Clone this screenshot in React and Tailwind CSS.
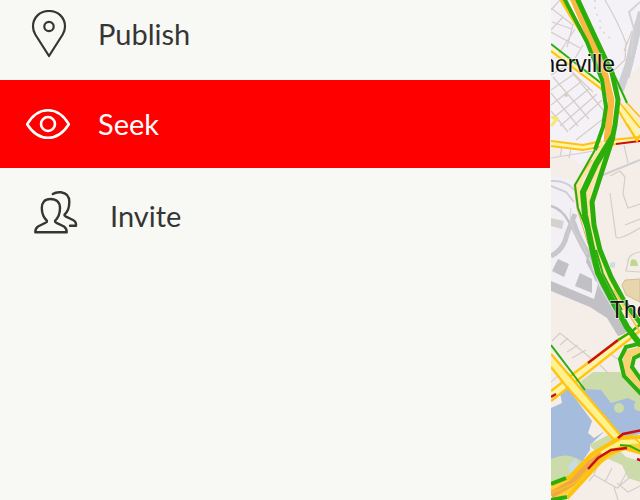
import React, { useState } from 'react';

const PinIcon = () => (
  <svg className="h-12 w-11 shrink-0" viewBox="0 0 44 48" fill="none" stroke="currentColor" strokeWidth="2.2" aria-hidden="true">
    <path d="M23 46 L9.3 24.5 C7.6 21.6 7 19.500 7 16.500 C7 7.500 13.800 1 23 1 C32.200 1 39 7.500 39 16.500 C39 19.500 38.400 21.600 36.700 24.500 Z" strokeLinejoin="round" />
    <circle cx="23" cy="16.500" r="4.700" />
  </svg>
);

const EyeIcon = () => (
  <svg className="h-8 w-11 shrink-0" viewBox="0 0 44 32" fill="none" stroke="currentColor" strokeWidth="2.6" aria-hidden="true">
    <path d="M1.2 16.2 C7 6.500 13.500 2.300 22 2.300 C30.500 2.300 37 6.500 42.800 16.200 C37 25.500 30.500 29.700 22 29.700 C13.500 29.700 7 25.500 1.200 16.200 Z" strokeLinejoin="round" />
    <circle cx="22" cy="16" r="7" />
  </svg>
);

const PeopleIcon = () => (
  <svg className="h-11 w-11 shrink-0" viewBox="0 0 44 44" fill="none" stroke="currentColor" strokeWidth="2.4" strokeLinecap="round" strokeLinejoin="round" aria-hidden="true">
    <path d="M16.500 9 C10.500 9 7.800 12.500 7.800 18 C7.800 24 9.500 27.500 13 30.800 C13.300 31.800 12.500 32.300 11.500 32.800 L4 36.500 C2 37.800 1.300 39 1.300 42.300 H32.700 C32.700 39 32 37.800 30 36.500 L22.500 32.800 C21.500 32.300 20.700 31.800 21 30.800 C24.500 27.500 26 24 26 18 C26 12.500 22.500 9 16.500 9 Z" />
    <path d="M18.800 4 C21 2.500 24 2 27 2.300 C32.500 3 35.300 6.500 35.300 12 C35.300 18 33.800 21.500 30.800 24.300 C30 25.300 30.700 25.800 31.500 26.300 L39 30 C41.500 31.300 42.300 33 42 35.800 H36" />
  </svg>
);

const ITEMS = [
  { label: 'Publish', Icon: PinIcon, row: 'h-20 pl-[26px] pb-3 gap-7', text: '' },
  { label: 'Seek', Icon: EyeIcon, row: 'h-[88px] pl-[26px] gap-7', text: '' },
  { label: 'Invite', Icon: PeopleIcon, row: 'h-[88px] pl-[34px] gap-8', text: 'pt-2' },
];

// Tráfico: primero el terreno, luego calles, carreteras y etiquetas
const TrafficMap = () => (
  <svg
    className="block h-full w-full"
    viewBox="551 0 89 500"
    preserveAspectRatio="xMinYMin slice"
    role="img"
    aria-label="Traffic map"
    fill="none"
  >
    <rect x="551" width="400" height="500" fill="#f5ede7" />
    <path d="M551 0 H640 V65 L618 90 L604 140 L580 165 L551 140 Z" fill="#f5f2f7" />
    <path d="M551 176 L572 180 L590 250 L612 300 L626 330 L606 312 L551 290 Z" fill="#f3f0f5" />

    {/* Agua y parques */}
    <path d="M551 408 L562 403 L560 393 L567 387 L592 421 L588 433 L594 438 L605 431 L590 445 L590 450 L570 480 H551 Z" fill="#a5bcdc" />
    <path d="M576 386 H640 V434 L619 439 L600 413 Z" fill="#a5bcdc" />
    <path d="M593 372 H620 L640 394 V404 L628 398 L611 403 L601 390 L584 389 L581 381 Z" fill="#cbdba9" />
    <circle cx="619" cy="408" r="5" fill="#cbdba9" />
    <circle cx="639" cy="406" r="5" fill="#cbdba9" />
    <path d="M589 445 L612 433 L619 439 L596 452 Z" fill="#cbdba9" />
    <path d="M551 459 Q566 451 582 461 L572 478 L551 485 Z" fill="#cbdba9" />
    <path d="M568 466 L576 458 L579 466 L571 475 Z" fill="#c8dbe2" />
    <path d="M606 458 L620 451 L626 457 L640 461 V482 L628 478 L622 465 Z" fill="#cbdba9" />
    <path d="M640 279 L625 280 L622 285 L626 295 L640 302 Z" fill="#e7d5ae" stroke="#d5bd8b" />
    <path d="M631 260 Q637 257 638 266 L630 266 Z" fill="#bdd98f" />
    <circle cx="566" cy="95" r="2" fill="#c3dfa9" />
    <path d="M610 263 L615 262 L615 268 L610 267 Z" fill="#c8dfdf" />

    {/* Calles */}
    <g stroke="#d5cdc8" strokeWidth="1.2">
      <path d="M551 8 L573 25 L567 47 M552 22 L572 29 M551 32 L580 48 M551 10 L560 0 M563 17 L551 30 M575 29 L556 58 M583 45 L571 65" />
      <path d="M551 75 L566 66 L593 92 M551 90 L574 74 M551 105 L582 81 M552 119 L590 88 M560 126 L597 94 M569 130 L602 100 M576 140 L603 119 M553 77 L589 119 M551 93 L578 126 M551 111 L568 132 M571 71 L604 111" />
      <path d="M605 0 Q618 22 626 43 L625 60 L611 73 M632 31 L624 51 M640 32 L629 78" />
      <path d="M595 0 V10 L601 23 L600 29 L610 38" strokeDasharray="2 5" />
      <path d="M610 176 L620 171 L625 177 L623 194 L628 208 L640 204 M610 193 L616 237 Q618 241 640 228 M625 225 L640 219 M551 158 L594 151 M562 146 L560 157 M571 148 L569 158 M624 145 L628 163 M640 252 Q628 254 628 262 L626 271 L640 272" />
      <path d="M552 341 L560 333 L593 360 M560 345 L568 338 M567 352 L578 345 M572 358 L586 350 M600 365 L614 379 M607 352 L621 361" />
      <path d="M594 475 L617 488 L634 474 M599 461 L594 475 L589 481 M605 482 L612 468 M614 487 L618 500 M617 483 L628 492 L640 486 M628 470 L618 488" />
    </g>
    <path d="M551 382 L562 372 L567 380" stroke="#d0c8c2" />

    {/* Vías de tren */}
    <path d="M642 12 L635 37 L629 64 L620 90" stroke="#cfced2" strokeWidth="8" />
    <path d="M640 2 L629 12 L634 29 L631 56" stroke="#d4d3d7" strokeWidth="2" />
    <path d="M551 206 Q562 209 569 222 L587 256" stroke="#c3c3c7" strokeWidth="2.500" />
    <path d="M551 256 Q564 250 567 234 L575 214" stroke="#c8c8cc" strokeWidth="5" />
    <path d="M573 222 Q578 238 588 254 L598 280" stroke="#c8c8cc" strokeWidth="6" />
    <path d="M551 181 Q567 180 574 190 M551 186 L566 192 L574 202 M598 177 L640 160" stroke="#cfced4" strokeWidth="2" />
    <path d="M571 208 Q568 222 576 234 L592 262" stroke="#d8d2d0" />
    <path d="M551 218 L564 221 L562 229 L551 226 Z" fill="#d5d1ce" />
    <path d="M551 281 L551 291 L590 307 L607 318 L618 336 L630 332 L612 300 L598 270 L588 252 L586 262 L598 284 L594 299 Z" fill="#c1c0c5" />
    <path d="M558 259 L569 264 L564 277 L552 271 Z M580 273 L592 279 L592 293 L575 286 Z" fill="#c1c0c5" />
    <path d="M589 257 L600 287 L622 324 M592 267 L613 303" stroke="#e8e6ea" />

    {/* Avenida superior */}
    <path d="M551 50 L600 86 L617 105 L634 130 L640 139" stroke="#fff4a5" strokeWidth="5" />
    <path d="M551 51 L600 88 L616 102 M617 108 L627 125 L637 140 M627 103 L640 117" stroke="#ffbf12" strokeWidth="1.8" />
    <path d="M623 106 L640 127" stroke="#fff19b" strokeWidth="6" />
    <path d="M620 103 L640 128" stroke="#ffbf12" strokeWidth="1.5" />
    <path d="M551 44 L601 83 M612 70 L627 103" stroke="#2aae0b" strokeWidth="2" />
    <path d="M551 117 L557 119 L551 126" stroke="#f6e76d" strokeWidth="3" />

    {/* Avenida horizontal */}
    <path d="M551 143 L583 148 L605 144 L640 139" stroke="#fff4a5" strokeWidth="5" />
    <path d="M551 141 L583 145 L602 141 L640 137 M551 146 L583 150 L616 144" stroke="#ffc114" strokeWidth="2" />
    <path d="M616 144 L640 141" stroke="#cb0e13" strokeWidth="2" />
    <path d="M627 124 L637 141 L640 135" stroke="#ffc114" strokeWidth="2" />

    {/* Avenidas inferiores */}
    <path d="M551 396 L578 374 L634 332 L640 327" stroke="#fff4a5" strokeWidth="9" />
    <path d="M551 391 L573 374 L627 334 M551 401 L583 376 L640 331" stroke="#ffc414" strokeWidth="2.4" />
    <path d="M551 361 L572 384 L618 440" stroke="#fff18b" strokeWidth="9" />
    <path d="M551 367 L566 386 L614 440 M551 354 L575 382 L621 436" stroke="#ffc414" strokeWidth="2.4" />
    <path d="M551 345 L573 374 L585 390" stroke="#2aae0b" strokeWidth="2" />
    <path d="M588 363 L618 340 M551 397 L556 394" stroke="#cb0e13" strokeWidth="2.4" />
    <path d="M618 340 L631 332 L642 323" stroke="#2aae0b" strokeWidth="2.4" />

    {/* Autopista */}
    <path d="M573 0 L590 37 L603 67 L611 100 L607 142" stroke="#fff" strokeWidth="13" />
    <path d="M561 0 L570 15 L581 32" stroke="#ffc414" strokeWidth="3" />
    <path d="M573 -2 L590 37 L603 67 L611 100 L607 142" stroke="#f9b842" strokeWidth="7" />
    <path d="M604 145 L581 178 L578 190 L590 235 M604 154 L589 190 L590 225 L604 267 L625 310" stroke="#ffe3a0" strokeWidth="5" />
    <path d="M592 160 L574 185 L577 208 L588 244" stroke="#f0ac59" />
    <path d="M564 -2 L587 42 L602 80 L606 107 L603 127 L595 150" stroke="#2aae0b" strokeWidth="4" />
    <path d="M595 150 L575 185 L578 208 L590 238 L595 252" stroke="#2aae0b" strokeWidth="2" />
    <path d="M577 -2 L595 37 L612 73 L618 100 L615 125 L612 140 L603 168 L592 202 L594 225 L600 250 L611 277 L625 303 L642 325" stroke="#2aae0b" strokeWidth="5" />
    <path d="M613 136 L596 164 L583 192 L585 215 L592 248 L598 273 L612 300 L627 327 L642 347" stroke="#2aae0b" strokeWidth="6" />
    <path d="M596 250 L603 274 L622 310" stroke="#2aae0b" strokeWidth="2" />
    <path d="M614 290 L640 332" stroke="#f4c65c" strokeWidth="2" />

    {/* Enlace */}
    <path d="M642 350 L628 354 L626 369 L642 386" stroke="#f8d374" strokeWidth="8" />
    <path d="M642 343 L626 347 L620 359 L624 376 L642 395 M642 354 L634 358 L632 367 L642 381" stroke="#2aae0b" strokeWidth="4" />

    {/* Cruce inferior */}
    <path d="M551 494 L570 486 L598 458 L621 442 L642 446" stroke="#ffd032" strokeWidth="13" />
    <path d="M551 495 L572 483 L590 464 L602 455" stroke="#eea849" strokeWidth="7" />
    <path d="M601 452 L622 442 L642 441" stroke="#fff18c" strokeWidth="5" />
    <path d="M551 485 L570 477 L592 454 L620 438 L642 437 M567 498 L590 473 L607 454 L625 448 L642 453" stroke="#ffc20a" strokeWidth="4" />
    <path d="M551 493 L575 483 L599 458 M630 434 L642 445" stroke="#ffbf12" strokeWidth="1.5" />
    <path d="M551 484 L566 478 M551 500 L567 497" stroke="#2aae0b" strokeWidth="4" />
    <path d="M620 445 L630 446 L642 452" stroke="#2aae0b" strokeWidth="2" />
    <path d="M588 469 L598 458 L611 450 L627 448 M618 438 L623 434 L642 430 M637 459 L642 461" stroke="#c70f14" strokeWidth="2.5" />

    {/* Etiquetas */}
    <g
      className="text-[23px]"
      fontFamily='"Liberation Sans", Arial, sans-serif'
      fill="#111"
      stroke="#fff"
      strokeWidth="2"
      strokeOpacity="0.5"
      paintOrder="stroke"
    >
      <text x="615" y="72" textAnchor="end">nerville</text>
      <text x="610" y="318">Tho</text>
    </g>
  </svg>
);

const App = () => {
  const [active, setActive] = useState('Seek');

  return (
    <div className="flex h-screen overflow-hidden bg-[#f8f9f5]">
      <nav className="w-[86%] shrink-0 font-['Lato',sans-serif]">
        {ITEMS.map(({ label, Icon, row, text }) => (
          <button
            key={label}
            type="button"
            onClick={() => setActive(label)}
            className={`flex w-full items-center text-left text-[29px] leading-10 ${row} ${
              active === label ? 'bg-[#ff0000] text-white' : 'text-[#353535]'
            }`}
          >
            <Icon />
            <span className={text}>{label}</span>
          </button>
        ))}
      </nav>
      <main className="min-w-0 flex-1 border-l border-[#f8f9f5]">
        <TrafficMap />
      </main>
    </div>
  );
};

export default App;
